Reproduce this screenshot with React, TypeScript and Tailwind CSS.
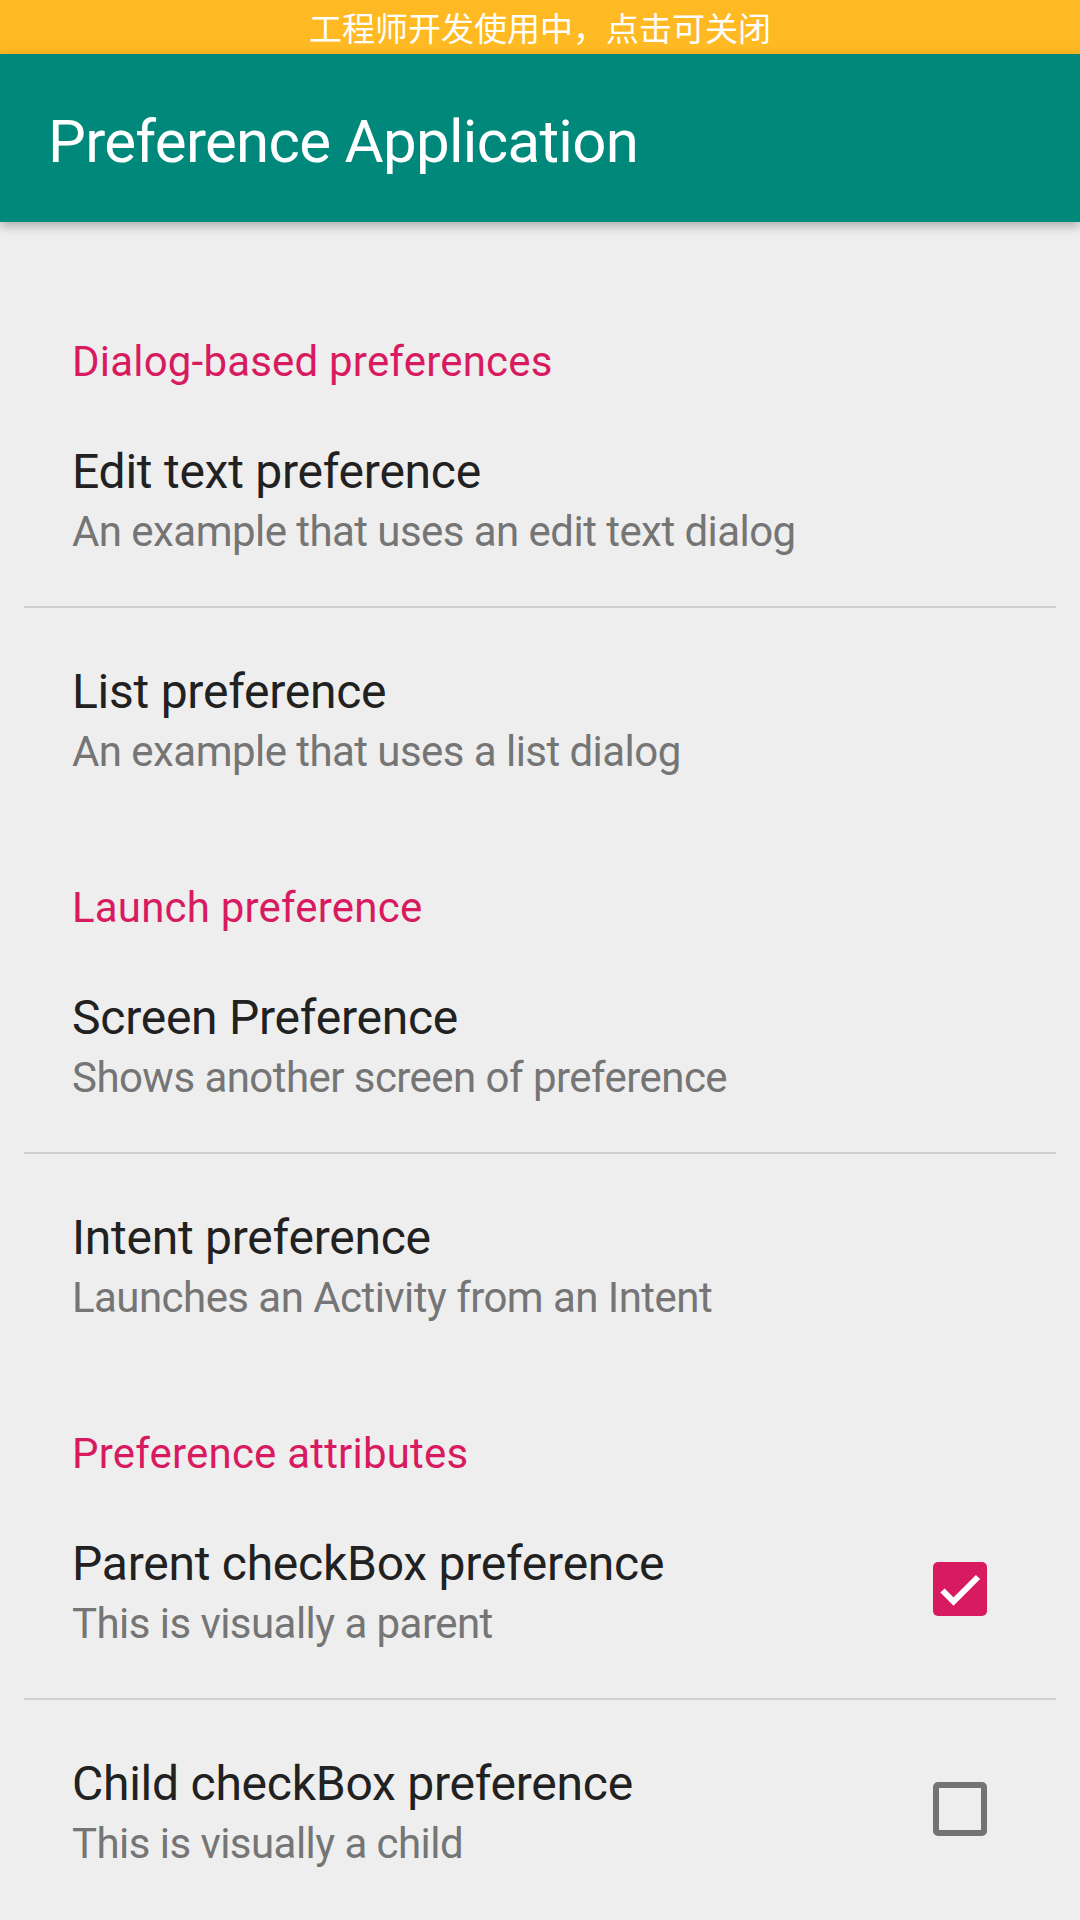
import { Fragment } from "react";

type itemProps = {
  title: string;
  summary: string;
  check?: "on" | "off";
};

type groupProps = {
  label: string;
  items: itemProps[];
};

const groups: groupProps[] = [
  {
    label: "Dialog-based preferences",
    items: [
      { title: "Edit text preference", summary: "An example that uses an edit text dialog" },
      { title: "List preference", summary: "An example that uses a list dialog" },
    ],
  },
  {
    label: "Launch preference",
    items: [
      { title: "Screen Preference", summary: "Shows another screen of preference" },
      { title: "Intent preference", summary: "Launches an Activity from an Intent" },
    ],
  },
  {
    label: "Preference attributes",
    items: [
      { title: "Parent checkBox preference", summary: "This is visually a parent", check: "on" },
      { title: "Child checkBox preference", summary: "This is visually a child", check: "off" },
    ],
  },
];

function CheckBox({ on }: { on: boolean }) {
  if (on) {
    return (
      <div className="w-[54px] h-[54px] rounded-[5px] bg-[#D81B60] flex items-center justify-center">
        <svg width="54" height="54" viewBox="0 0 54 54">
          <path d="M9.5 28.5 L20.5 39.5 L45 15" fill="none" stroke="#ffffff" strokeWidth="6" />
        </svg>
      </div>
    );
  }
  return <div className="w-[54px] h-[54px] rounded-[5px] border-[6px] border-[#737373]" />;
}

export default function App() {
  return (
    <div className="w-[1080px] h-[1920px] bg-[#eeeeee] overflow-hidden font-['Roboto',sans-serif]">
      <div className="h-[54px] bg-[#FFB922] flex items-center justify-center text-white text-[33px] leading-[54px] font-['Noto_Sans_CJK_SC',sans-serif]">
        工程师开发使用中，点击可关闭
      </div>
      <header className="relative z-10 h-[168px] bg-[#00897B] flex items-center pl-[48px] pt-[7px] shadow-[0_4px_10px_rgba(0,0,0,0.28)]">
        <h1 className="text-white text-[60px] leading-[60px] tracking-[-0.7px]">Preference Application</h1>
      </header>

      <main className="pt-[58px] px-[24px]">
        {groups.map((g) => (
          <section key={g.label}>
            <h3 className="pt-[58px] pb-[2px] pl-[48px] text-[#D81B60] text-[42px] leading-[48px] tracking-[0.2px]">
              {g.label}
            </h3>
            {g.items.map((x, i) => (
              <Fragment key={x.title}>
                {i > 0 && <div className="h-[2px] bg-[#cecece]" />}
                <div className="flex items-center pl-[48px] pr-[69px]">
                  <div className="flex-1 pt-[54px] pb-[44px]">
                    <h4 className="text-[#212121] text-[48px] leading-[60px] tracking-[-0.25px]">{x.title}</h4>
                    <p className="text-[#757575] text-[42px] leading-[60px] tracking-[-0.55px]">{x.summary}</p>
                  </div>
                  {x.check && <CheckBox on={x.check === "on"} />}
                </div>
              </Fragment>
            ))}
          </section>
        ))}
      </main>
    </div>
  );
}
